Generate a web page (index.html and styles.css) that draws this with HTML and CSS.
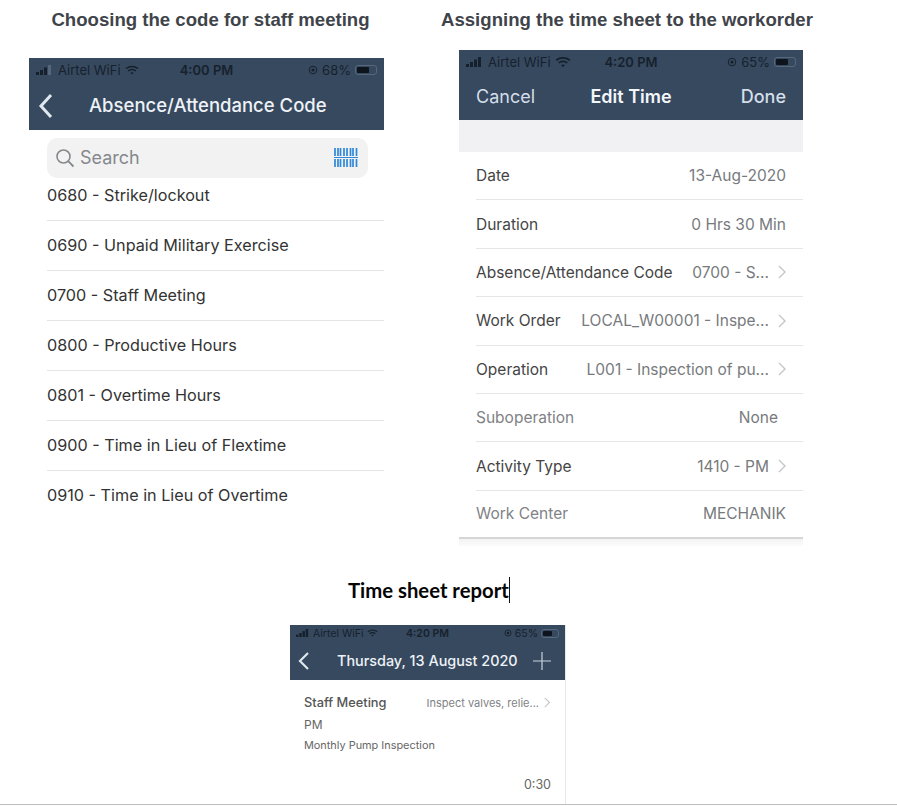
FILE: index.html
```html
<!DOCTYPE html>
<html lang="en">
<head>
    <meta charset="UTF-8">
    <meta name="viewport" content="width=device-width, initial-scale=1.0">
    <title>Time sheet steps</title>
    <link rel="stylesheet" href="styles.css">
</head>
<body>

    <div class="top-row">
        <section class="step step-code">
            <h2>Choosing the code for staff meeting</h2>
            <div class="phone-bar">
                <div class="status">
                    <span class="status-left">
                        <svg class="signal" width="16" height="10" viewBox="0 0 16 10"><rect x="0" y="7" width="3" height="3" fill="#16202c"/><rect x="4" y="5" width="3" height="5" fill="#16202c"/><rect x="8" y="2.5" width="3" height="7.5" fill="#16202c"/><rect x="12" y="0" width="3" height="10" fill="#55677b"/></svg>
                        Airtel WiFi
                        <svg class="wifi" width="14" height="10" viewBox="0 0 14 10"><path d="M1 3.500C4.500.8 9.500.8 13 3.500M3.200 5.800C5.400 4.200 8.600 4.200 10.800 5.800" fill="none" stroke="#16202c" stroke-width="1.500"/><path d="M5.300 7.700 7 9.500l1.700-1.800C7.700 7 6.300 7 5.300 7.700z" fill="#16202c"/></svg>
                    </span>
                    <span class="status-time">4:00 PM</span>
                    <span class="status-right">
                        <svg class="lock" width="10" height="10" viewBox="0 0 10 10"><circle cx="5" cy="5" r="3.800" fill="none" stroke="#16202c"/><circle cx="5" cy="5" r="1.600" fill="#16202c"/></svg>
                        68%
                        <span class="battery"><span class="battery-fill fill-68"></span></span>
                    </span>
                </div>
                <div class="nav nav-code">
                    <svg class="back" width="16" height="26" viewBox="0 0 16 26"><path d="M13 2 3 13l10 11" fill="none" stroke="#dfe7ef" stroke-width="3"/></svg>
                    <span class="nav-title">Absence/Attendance Code</span>
                </div>
            </div>
            <div class="search">
                <svg width="20" height="20" viewBox="0 0 20 20"><circle cx="8.500" cy="8.500" r="6.500" fill="none" stroke="#85888c" stroke-width="1.600"/><path d="M13.200 13.200 18.500 18.500" stroke="#85888c" stroke-width="1.800"/></svg>
                <span class="search-text">Search</span>
                <svg class="barcode" width="24" height="22" viewBox="0 0 24 22">
                    <path d="M1 1v8M4 1v8M6.500 1v8M10 1v8M13 1v8M16.500 1v8M19 1v8M22.500 1v8M1 12v8M4 12v8M6.500 12v8M10 12v8M13 12v8M16.500 12v8M19 12v8M22.500 12v8" stroke="#2f88d8" stroke-width="1.700"/>
                    <path d="M0 10.500h24" stroke="#2f88d8"/>
                </svg>
            </div>
            <ul class="code-list">
                <li>0680 - Strike/lockout</li>
                <li>0690 - Unpaid Military Exercise</li>
                <li>0700 - Staff Meeting</li>
                <li>0800 - Productive Hours</li>
                <li>0801 - Overtime Hours</li>
                <li>0900 - Time in Lieu of Flextime</li>
                <li>0910 - Time in Lieu of Overtime</li>
            </ul>
        </section>

        <section class="step step-edit">
            <h2>Assigning the time sheet to the workorder</h2>
            <div class="edit-phone">
                <div class="phone-bar">
                    <div class="status">
                        <span class="status-left">
                            <svg class="signal" width="16" height="10" viewBox="0 0 16 10"><rect x="0" y="7" width="3" height="3" fill="#16202c"/><rect x="4" y="5" width="3" height="5" fill="#16202c"/><rect x="8" y="2.500" width="3" height="7.500" fill="#16202c"/><rect x="12" y="0" width="3" height="10" fill="#16202c"/></svg>
                            Airtel WiFi
                            <svg class="wifi" width="16" height="12" viewBox="0 0 14 10"><path d="M1 3.500C4.500.8 9.500.8 13 3.500M3.200 5.800C5.400 4.200 8.600 4.200 10.800 5.800" fill="none" stroke="#16202c" stroke-width="1.500"/><path d="M5.300 7.700 7 9.500l1.700-1.800C7.700 7 6.300 7 5.300 7.700z" fill="#16202c"/></svg>
                        </span>
                        <span class="status-time">4:20 PM</span>
                        <span class="status-right">
                            <svg class="lock" width="10" height="10" viewBox="0 0 10 10"><circle cx="5" cy="5" r="3.800" fill="none" stroke="#16202c"/><circle cx="5" cy="5" r="1.600" fill="#16202c"/></svg>
                            65%
                            <span class="battery"><span class="battery-fill fill-65"></span></span>
                        </span>
                    </div>
                    <div class="nav nav-edit">
                        <span class="nav-action">Cancel</span>
                        <span class="nav-title-small">Edit Time</span>
                        <span class="nav-action action-done">Done</span>
                    </div>
                </div>
                <div class="gray-band"></div>
                <div class="form-row"><span class="label">Date</span><span class="value">13-Aug-2020</span></div>
                <div class="form-row"><span class="label">Duration</span><span class="value">0 Hrs 30 Min</span></div>
                <div class="form-row"><span class="label">Absence/Attendance Code</span><span class="value">0700 - S...<svg class="chev" width="9" height="14" viewBox="0 0 9 14"><path d="M1 1l6 6-6 6" fill="none" stroke="#c4c6c9" stroke-width="1.400"/></svg></span></div>
                <div class="form-row"><span class="label">Work Order</span><span class="value">LOCAL_W00001 - Inspe...<svg class="chev" width="9" height="14" viewBox="0 0 9 14"><path d="M1 1l6 6-6 6" fill="none" stroke="#c4c6c9" stroke-width="1.400"/></svg></span></div>
                <div class="form-row"><span class="label">Operation</span><span class="value">L001 - Inspection of pu...<svg class="chev" width="9" height="14" viewBox="0 0 9 14"><path d="M1 1l6 6-6 6" fill="none" stroke="#c4c6c9" stroke-width="1.400"/></svg></span></div>
                <div class="form-row"><span class="label muted">Suboperation</span><span class="value value-none">None</span></div>
                <div class="form-row"><span class="label">Activity Type</span><span class="value">1410 - PM<svg class="chev" width="9" height="14" viewBox="0 0 9 14"><path d="M1 1l6 6-6 6" fill="none" stroke="#c4c6c9" stroke-width="1.400"/></svg></span></div>
                <div class="form-row last"><span class="label muted">Work Center</span><span class="value">MECHANIK</span></div>
                <div class="edit-bottom"></div>
            </div>
        </section>
    </div>

    <section class="report">
        <h2 class="report-title"><span class="caret">Time sheet report</span></h2>
        <div class="report-phone">
            <div class="phone-bar">
                <div class="status status-small">
                    <span class="status-left">
                        <svg class="signal" width="13" height="8" viewBox="0 0 16 10"><rect x="0" y="7" width="3" height="3" fill="#16202c"/><rect x="4" y="5" width="3" height="5" fill="#16202c"/><rect x="8" y="2.500" width="3" height="7.500" fill="#16202c"/><rect x="12" y="0" width="3" height="10" fill="#16202c"/></svg>
                        Airtel WiFi
                        <svg class="wifi" width="11" height="8" viewBox="0 0 14 10"><path d="M1 3.500C4.500.8 9.500.8 13 3.500M3.200 5.800C5.400 4.200 8.600 4.200 10.800 5.800" fill="none" stroke="#16202c" stroke-width="1.500"/><path d="M5.300 7.700 7 9.500l1.700-1.800C7.700 7 6.300 7 5.300 7.700z" fill="#16202c"/></svg>
                    </span>
                    <span class="status-time">4:20 PM</span>
                    <span class="status-right">
                        <svg class="lock" width="8" height="8" viewBox="0 0 10 10"><circle cx="5" cy="5" r="3.800" fill="none" stroke="#16202c"/><circle cx="5" cy="5" r="1.600" fill="#16202c"/></svg>
                        65%
                        <span class="battery battery-small"><span class="battery-fill fill-65"></span></span>
                    </span>
                </div>
                <div class="nav nav-report">
                    <svg class="back" width="12" height="20" viewBox="0 0 12 20"><path d="M10 2 2 10l8 8" fill="none" stroke="#dfe7ef" stroke-width="2.200"/></svg>
                    <span class="report-date">Thursday, 13 August 2020</span>
                    <svg class="plus" width="18" height="18" viewBox="0 0 18 18"><path d="M9 0v18M0 9h18" stroke="#c9d3dd" stroke-width="1.200"/></svg>
                </div>
            </div>
            <div class="report-body">
                <div class="report-line">
                    <span class="report-name">Staff Meeting</span>
                    <span class="report-op">Inspect valves, relie...<svg class="chev" width="7" height="11" viewBox="0 0 9 14"><path d="M1 1l6 6-6 6" fill="none" stroke="#c4c6c9" stroke-width="1.400"/></svg></span>
                </div>
                <div class="report-pm">PM</div>
                <div class="report-desc">Monthly Pump Inspection</div>
                <div class="report-time">0:30</div>
            </div>
        </div>
    </section>

</body>
</html>
```

FILE: styles.css
```css
body {
    margin: 0;
    height: 806px;
    overflow: hidden;
    background-color: white;
    font-family: Inter, sans-serif;
    color: #3b3b3b;
}
h2 {
    margin: 0;
    font-family: "Liberation Sans", Arial, sans-serif;
    font-size: 18.600px;
    font-weight: bold;
    line-height: 22px;
    color: #3f444a;
    white-space: nowrap;
}
.top-row {
    display: flex;
    align-items: flex-start;
    padding-top: 9px;
    height: 566px;
}
.step-code {
    width: 355px;
    margin-left: 29px;
}
.step-code h2 {
    padding-left: 8px;
    text-align: center;
    margin-bottom: 27px;
}
.step-edit {
    width: 373px;
    margin-left: 57px;
}
.step-edit h2 {
    margin-bottom: 19px;
}
.edit-phone {
    width: 344px;
    margin-left: 18px;
}

/* phone header */
.phone-bar {
    background-color: #36495f;
}
.status {
    display: flex;
    align-items: center;
    justify-content: space-between;
    height: 23px;
    padding: 0 7px;
    font-size: 13px;
    color: #17212d;
}
.status-left, .status-right {
    display: flex;
    align-items: center;
    gap: 4px;
    width: 120px;
}
.status-right {
    justify-content: flex-end;
}
.signal {
    margin-right: 2px;
}
.status-time {
    font-weight: 600;
}
.battery {
    display: inline-block;
    width: 22px;
    height: 10px;
    padding: 1px;
    border-radius: 3px;
    border: 1px solid #55677b;
    box-sizing: border-box;
}
.battery-small {
    width: 18px;
    height: 9px;
}
.battery-fill {
    display: block;
    height: 100%;
    border-radius: 1px;
    background-color: #0d141c;
}
.fill-68 {
    width: 68%;
}
.fill-65 {
    width: 65%;
}
.nav {
    display: flex;
    align-items: center;
}
.nav-code {
    height: 49px;
    padding-left: 9px;
}
.nav-title {
    margin-left: 35px;
    margin-bottom: 2px;
    font-size: 18.500px;
    font-weight: 500;
    color: #eef2f6;
}
.nav-edit {
    height: 47px;
    padding: 0 17px;
    justify-content: space-between;
}
.nav-action {
    flex: 1;
    font-size: 18px;
    color: #d5dee8;
}
.action-done {
    text-align: right;
    font-weight: 500;
}
.nav-title-small {
    font-size: 18px;
    font-weight: 600;
    color: #f3f6f9;
}

/* left list */
.search {
    display: flex;
    align-items: center;
    height: 40px;
    margin: 8px 16px 0 18px;
    padding: 0 10px 0 8px;
    border-radius: 10px;
    background-color: #f2f2f3;
}
.search-text {
    flex: 1;
    margin-left: 5px;
    margin-bottom: 2px;
    font-size: 18px;
    color: #85888c;
}
.code-list {
    list-style: none;
    margin: -7px 0 0 18px;
    padding: 0;
}
.code-list li {
    display: flex;
    align-items: center;
    box-sizing: border-box;
    height: 50px;
    padding-bottom: 2px;
    border-bottom: 1px solid #e4e4e6;
    font-size: 16.200px;
    color: #333;
}
.code-list li:last-child {
    border-bottom: none;
}

/* edit form */
.gray-band {
    height: 32px;
    background-color: #f1f1f4;
}
.form-row {
    display: flex;
    align-items: center;
    justify-content: space-between;
    height: 47.400px;
    margin-left: 17px;
    padding-right: 17px;
    border-bottom: 1px solid #e6e6e8;
    font-size: 15.500px;
    white-space: nowrap;
}
.form-row.last {
    height: 46.400px;
    border-bottom: none;
}
.label {
    color: #444;
}
.label.muted {
    color: #808285;
}
.value {
    display: flex;
    align-items: center;
    color: #777a7d;
}
.value-none {
    padding-right: 8px;
}
.chev {
    margin-left: 9px;
    margin-right: -1px;
}
.edit-bottom {
    height: 7px;
    border-top: 2px solid #d6d6d8;
    background: linear-gradient(#f3f3f4, #fbfbfb);
}

/* report */
.report {
    height: 230px;
    border-bottom: 1px solid #bdbdbd;
    box-sizing: border-box;
}
.report-title {
    margin-left: 348px;
    height: 30px;
    padding-top: 2px;
    font-family: Lato, sans-serif;
    font-size: 20.300px;
    line-height: 26px;
    color: #050505;
}
.caret {
    display: inline-block;
    border-right: 1px solid #111;
}
.report-phone {
    width: 276px;
    height: 179px;
    margin: 18px 0 0 290px;
    box-sizing: border-box;
    border-right: 1px solid #e8e8e8;
}
.status-small {
    height: 16px;
    padding: 0 6px;
    font-size: 10.500px;
}
.status-small .status-left, .status-small .status-right {
    gap: 3px;
    width: 90px;
}
.status-small .signal {
    margin-right: 1px;
}
.nav-report {
    height: 39px;
    padding: 0 14px 0 8px;
}
.report-date {
    flex: 1;
    margin-left: 27px;
    font-size: 14.400px;
    font-weight: 500;
    color: #eef2f6;
}
.report-body {
    padding: 13px 14px 0 14px;
    color: #666;
}
.report-line {
    display: flex;
    justify-content: space-between;
    align-items: center;
    height: 18px;
}
.report-name {
    font-size: 12.800px;
    font-weight: 500;
    color: #555;
}
.report-op {
    display: flex;
    align-items: center;
    margin-top: 1px;
    font-size: 11px;
    color: #808285;
}
.report-op .chev {
    margin-left: 5px;
    margin-right: 0;
}
.report-pm {
    margin-top: 6px;
    font-size: 12px;
    line-height: 16px;
}
.report-desc {
    margin-top: 5px;
    font-size: 10.900px;
    line-height: 14px;
}
.report-time {
    margin-top: 25px;
    font-size: 12.500px;
    text-align: right;
}
```
